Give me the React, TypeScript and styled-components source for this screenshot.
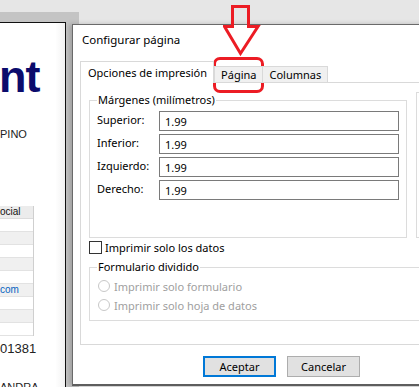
import styled, { createGlobalStyle } from 'styled-components';

const GlobalStyle = createGlobalStyle`
  html, body {
    margin: 0;
    padding: 0;
    background: #e6e6e6;
    overflow: hidden;
  }
  * {
    box-sizing: border-box;
  }
`;

const ui = `'Noto Sans', 'Open Sans', sans-serif`;

const rows = ['', '', '', '', '', 'com', '', '', ''];

export default function App() {
  return (
    <>
      <GlobalStyle />
      <Screen>
        <TopStrip />
        <Workspace>
          <SideArea>
            <Page>
              <BigTitle>nt</BigTitle>
              <SmallLine $gap={31}>PINO</SmallLine>
              <MiniTable>
                <MiniHead>ocial</MiniHead>
                {rows.map((r, i) => (
                  <MiniRow key={i} $odd={i % 2 === 1}>
                    {r}
                  </MiniRow>
                ))}
              </MiniTable>
              <Number>01381</Number>
              <SmallLine $gap={25}>ANDRA</SmallLine>
            </Page>
          </SideArea>
        </Workspace>

        <Dialog>
          <TitleBar>Configurar página</TitleBar>
          <Tabs>
            <Tab $active>Opciones de impresión</Tab>
            <Tab>Página</Tab>
            <Tab>Columnas</Tab>
          </Tabs>
          <Panel>
            <TopGroups>
              <Group $width={318}>
                <Legend>Márgenes (milímetros)</Legend>
                <Fields>
                  {['Superior:', 'Inferior:', 'Izquierdo:', 'Derecho:'].map((l) => (
                    <FieldRow key={l}>
                      <FieldLabel>{l}</FieldLabel>
                      <Input>1.99</Input>
                    </FieldRow>
                  ))}
                </Fields>
              </Group>
              <Group $width={60} />
            </TopGroups>
            <CheckRow>
              <CheckBox />
              <span>Imprimir solo los datos</span>
            </CheckRow>
            <Group $width={360}>
              <Legend>Formulario dividido</Legend>
              <Radios>
                <RadioRow>
                  <Radio />
                  <span>Imprimir solo formulario</span>
                </RadioRow>
                <RadioRow>
                  <Radio />
                  <span>Imprimir solo hoja de datos</span>
                </RadioRow>
              </Radios>
            </Group>
          </Panel>
          <Buttons>
            <Button $primary>Aceptar</Button>
            <Button>Cancelar</Button>
          </Buttons>
        </Dialog>

        <Callout>
          <svg width="40" height="56" viewBox="0 0 40 56">
            <path
              d="M9.5 3.5 H25.5 V23.5 H35 L17.5 50.5 L1.5 23.5 H9.5 Z"
              fill="none"
              stroke="#ec1c24"
              strokeWidth="3"
              strokeLinejoin="miter"
            />
          </svg>
        </Callout>
        <Highlight />
      </Screen>
    </>
  );
}

const Screen = styled.div`
  position: relative;
  width: 419px;
  height: 387px;
  overflow: hidden;
  display: flex;
  flex-direction: column;
  background: #e6e6e6;
`;

const TopStrip = styled.div`
  height: 12px;
  background: #e6e6e6;
`;

const Workspace = styled.div`
  flex: 1;
  display: flex;
  min-height: 0;
`;

const SideArea = styled.div`
  width: 79px;
  background: #c4c4c4;
  padding-top: 10px;
  display: flex;
`;

const Page = styled.div`
  width: 66px;
  background: linear-gradient(90deg, #ffffff 85%, #f2f2f2 100%);
  border-top: 1px solid #111;
  border-right: 1px solid #111;
  overflow: hidden;
  display: flex;
  flex-direction: column;
  font-family: 'Liberation Sans', Arial, sans-serif;
  color: #222;

  & > * {
    flex-shrink: 0;
  }
`;

const BigTitle = styled.div`
  margin-top: 34px;
  margin-left: -1px;
  font-size: 45px;
  font-weight: bold;
  line-height: 40px;
  color: #0b0b6c;
  letter-spacing: -1px;
`;

const SmallLine = styled.div<{ $gap: number }>`
  margin-top: ${(p) => p.$gap}px;
  font-size: 11px;
  line-height: 13px;
`;

const MiniTable = styled.div`
  margin-top: 65px;
  width: 34px;
  border-right: 1px solid #cfcfcf;
  font-size: 10px;
`;

const MiniHead = styled.div`
  height: 13px;
  line-height: 12px;
  background: #ececec;
  border-bottom: 1px solid #dcdcdc;
  color: #111;
`;

const MiniRow = styled.div<{ $odd?: boolean }>`
  height: 13px;
  line-height: 12px;
  border-bottom: 1px solid #e2e2e2;
  background: ${(p) => (p.$odd ? '#f0f0f0' : '#ffffff')};
  color: #0563c1;
`;

const Number = styled.div`
  margin-top: 5px;
  font-size: 13px;
  line-height: 15px;
`;

const Dialog = styled.div`
  position: absolute;
  left: 72px;
  top: 24px;
  width: 420px;
  height: 362px;
  background: #ffffff;
  border: 1px solid #6a6a6a;
  border-bottom: 2px solid #5e5e5e;
  box-shadow: -3px 0 5px rgba(0, 0, 0, 0.18);
  font-family: ${ui};
  font-size: 11px;
  color: #000;
  display: flex;
  flex-direction: column;
`;

const TitleBar = styled.div`
  height: 36px;
  padding: 7px 0 0 9px;
  font-size: 11.5px;
  line-height: 16px;
`;

const Tabs = styled.div`
  display: flex;
  align-items: flex-end;
  padding-left: 7px;
  height: 22px;
  margin-bottom: -1px;
  position: relative;
  z-index: 1;
`;

const Tab = styled.div<{ $active?: boolean }>`
  height: ${(p) => (p.$active ? '22px' : '17px')};
  padding: ${(p) => (p.$active ? '3px 6px 0 7px' : '0 6px')};
  margin-right: ${(p) => (p.$active ? '0' : '-1px')};
  line-height: 16px;
  background: ${(p) => (p.$active ? '#ffffff' : '#f0f0f0')};
  border: 1px solid #d9d9d9;
  border-bottom: ${(p) => (p.$active ? 'none' : '1px solid #d9d9d9')};
  white-space: nowrap;
`;

const Panel = styled.div`
  margin-left: 7px;
  height: 263px;
  border: 1px solid #d9d9d9;
  border-right: none;
  padding: 9px 0 0 8px;
  display: flex;
  flex-direction: column;
`;

const TopGroups = styled.div`
  display: flex;
  gap: 9px;
`;

const Group = styled.fieldset<{ $width: number }>`
  margin: 0;
  width: ${(p) => p.$width}px;
  min-width: 0;
  border: 1px solid #dcdcdc;
  padding: 0 7px;
  flex-shrink: 0;
`;

const Legend = styled.legend`
  padding: 0 1px;
  line-height: 16px;
`;

const Fields = styled.div`
  display: flex;
  flex-direction: column;
  gap: 3px;
  padding-top: 3px;
  height: 129px;
`;

const FieldRow = styled.div`
  display: flex;
  align-items: center;
  height: 20px;
`;

const FieldLabel = styled.div`
  width: 62px;
  margin-top: -4px;
`;

const Input = styled.div`
  width: 240px;
  height: 20px;
  border: 1px solid #7a7a7a;
  padding: 2px 0 0 5px;
  line-height: 16px;
`;

const CheckRow = styled.div`
  display: flex;
  align-items: center;
  gap: 3px;
  height: 17px;
  margin-top: 1px;
  margin-bottom: 3px;
`;

const CheckBox = styled.div`
  width: 13px;
  height: 13px;
  border: 1px solid #333;
  background: #fff;
`;

const Radios = styled.div`
  display: flex;
  flex-direction: column;
  gap: 3px;
  padding: 3px 0 7px 1px;
  color: #a0a0a0;
`;

const RadioRow = styled.div`
  display: flex;
  align-items: center;
  gap: 4px;
  height: 16px;
`;

const Radio = styled.div`
  width: 12px;
  height: 12px;
  border-radius: 50%;
  border: 1px solid #c8c8c8;
  background: #fff;
`;

const Buttons = styled.div`
  display: flex;
  gap: 11px;
  padding: 11px 0 0 130px;
`;

const Button = styled.div<{ $primary?: boolean }>`
  width: 73px;
  height: 21px;
  display: flex;
  align-items: center;
  justify-content: center;
  background: #e1e1e1;
  border: ${(p) => (p.$primary ? '2px solid #0078d7' : '1px solid #adadad')};
  font-size: 11px;
`;

const Callout = styled.div`
  position: absolute;
  left: 223px;
  top: 3px;
  width: 40px;
  height: 56px;
  line-height: 0;
`;

const Highlight = styled.div`
  position: absolute;
  left: 213px;
  top: 57px;
  width: 51px;
  height: 36px;
  border: 3.5px solid #ec1c24;
  border-radius: 7px;
`;
